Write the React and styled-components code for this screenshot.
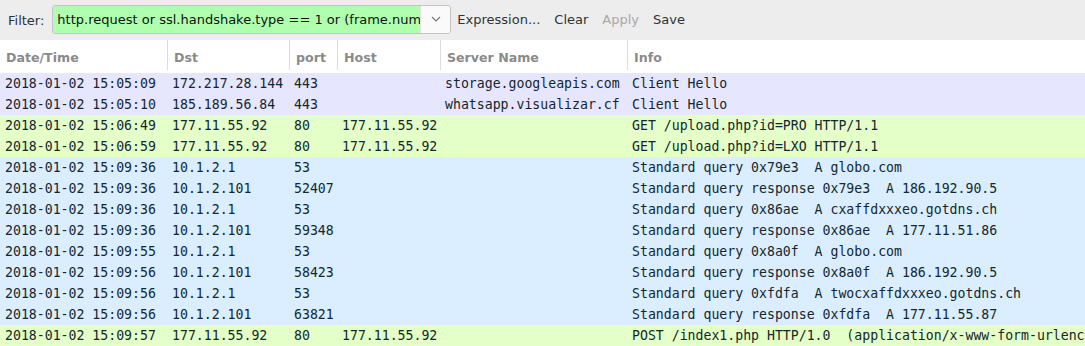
import styled, { createGlobalStyle } from "styled-components";

const GlobalStyle = createGlobalStyle`
  html, body {
    margin: 0;
    padding: 0;
    background: #ffffff;
  }
  body {
    width: 1085px;
    height: 346px;
    overflow: hidden;
  }
`;

const COLS = "167px 122px 48px 103px 187px 1fr";

const ROW_BG = {
  tcp: "#e7e6ff",
  http: "#e4ffc7",
  udp: "#daeeff",
};

const packets = [
  ["2018-01-02 15:05:09", "172.217.28.144", "443", "", "storage.googleapis.com", "Client Hello", "tcp"],
  ["2018-01-02 15:05:10", "185.189.56.84", "443", "", "whatsapp.visualizar.cf", "Client Hello", "tcp"],
  ["2018-01-02 15:06:49", "177.11.55.92", "80", "177.11.55.92", "", "GET /upload.php?id=PRO HTTP/1.1", "http"],
  ["2018-01-02 15:06:59", "177.11.55.92", "80", "177.11.55.92", "", "GET /upload.php?id=LXO HTTP/1.1", "http"],
  ["2018-01-02 15:09:36", "10.1.2.1", "53", "", "", "Standard query 0x79e3  A globo.com", "udp"],
  ["2018-01-02 15:09:36", "10.1.2.101", "52407", "", "", "Standard query response 0x79e3  A 186.192.90.5", "udp"],
  ["2018-01-02 15:09:36", "10.1.2.1", "53", "", "", "Standard query 0x86ae  A cxaffdxxxeo.gotdns.ch", "udp"],
  ["2018-01-02 15:09:36", "10.1.2.101", "59348", "", "", "Standard query response 0x86ae  A 177.11.51.86", "udp"],
  ["2018-01-02 15:09:55", "10.1.2.1", "53", "", "", "Standard query 0x8a0f  A globo.com", "udp"],
  ["2018-01-02 15:09:56", "10.1.2.101", "58423", "", "", "Standard query response 0x8a0f  A 186.192.90.5", "udp"],
  ["2018-01-02 15:09:56", "10.1.2.1", "53", "", "", "Standard query 0xfdfa  A twocxaffdxxxeo.gotdns.ch", "udp"],
  ["2018-01-02 15:09:56", "10.1.2.101", "63821", "", "", "Standard query response 0xfdfa  A 177.11.55.87", "udp"],
  ["2018-01-02 15:09:57", "177.11.55.92", "80", "177.11.55.92", "", "POST /index1.php HTTP/1.0  (application/x-www-form-urlencoded)", "http"],
];

const headers = ["Date/Time", "Dst", "port", "Host", "Server Name", "Info"];

const App = () => {
  return (
    <Window>
      <GlobalStyle />
      <Toolbar>
        <Label>Filter:</Label>
        <FilterCombo>
          <FilterInput>http.request or ssl.handshake.type == 1 or (frame.number == 1)</FilterInput>
          <DropButton>
            <svg width="10" height="6" viewBox="0 0 10 6">
              <path d="M1 1 L5 5 L9 1" fill="none" stroke="#777" strokeWidth="1.2" />
            </svg>
          </DropButton>
        </FilterCombo>
        <ToolButton>Expression...</ToolButton>
        <ToolButton>Clear</ToolButton>
        <ToolButton disabled>Apply</ToolButton>
        <ToolButton>Save</ToolButton>
      </Toolbar>

      <PacketList>
        <HeaderRow>
          {headers.map((h, i) => (
            <HeaderCell key={h} $first={i === 0}>
              {h}
            </HeaderCell>
          ))}
        </HeaderRow>
        {packets.map((p, i) => (
          <Row key={i} $kind={p[6]}>
            {p.slice(0, 6).map((c, j) => (
              <Cell key={j}>{c}</Cell>
            ))}
          </Row>
        ))}
      </PacketList>
    </Window>
  );
};

export default App;

const Window = styled.div`
  display: flex;
  flex-direction: column;
  width: 1085px;
  height: 346px;
  overflow: hidden;
  font-family: "DejaVu Sans", "Liberation Sans", sans-serif;
`;

const Toolbar = styled.div`
  display: flex;
  align-items: center;
  height: 40px;
  padding: 0 0 0 8px;
  background: #ededed;
  font-size: 13px;
  color: #2e3436;
  flex-shrink: 0;
`;

const Label = styled.span`
  margin-right: 8px;
  color: #2e3436;
`;

const FilterCombo = styled.div`
  display: flex;
  flex-shrink: 0;
  height: 29px;
  width: 399px;
  border: 1px solid #c4c4c4;
  border-radius: 3px;
  overflow: hidden;
  box-sizing: border-box;
  margin-top: -2px;
`;

const FilterInput = styled.div`
  flex: 1;
  min-width: 0;
  background: #afffaf;
  padding: 0 0 0 4px;
  line-height: 28px;
  white-space: nowrap;
  overflow: hidden;
  color: #111;
`;

const DropButton = styled.div`
  width: 29px;
  flex-shrink: 0;
  display: flex;
  align-items: center;
  justify-content: center;
  background: #fafafa;
  border-left: 1px solid #e2e2e2;
`;

const ToolButton = styled.span`
  margin-left: 6px;
  padding: 0 5px 0 0;
  margin-top: -1px;
  color: ${(p) => (p.disabled ? "#a8a8a8" : "#2e3436")};
  & + & {
    margin-left: 9px;
  }
`;

const PacketList = styled.div`
  display: flex;
  flex-direction: column;
  background: #fff;
`;

const HeaderRow = styled.div`
  display: grid;
  grid-template-columns: ${COLS};
  height: 33px;
  align-items: stretch;
  background: #fff;
`;

const HeaderCell = styled.div`
  display: flex;
  align-items: center;
  padding: 4px 0 0 6px;
  margin-bottom: 3px;
  font-size: 12.6px;
  font-weight: bold;
  color: #8a8a8a;
  border-left: ${(p) => (p.$first ? "none" : "1px solid #dcdcdc")};
`;

const Row = styled.div`
  display: grid;
  grid-template-columns: ${COLS};
  height: 21px;
  align-items: center;
  background: ${(p) => ROW_BG[p.$kind]};
  font-family: "DejaVu Sans Mono", "Liberation Mono", monospace;
  font-size: 13.2px;
  color: #12272e;
`;

const Cell = styled.div`
  padding-left: 5px;
  white-space: pre;
  overflow: hidden;
  &:last-child {
    overflow: visible;
  }
`;
